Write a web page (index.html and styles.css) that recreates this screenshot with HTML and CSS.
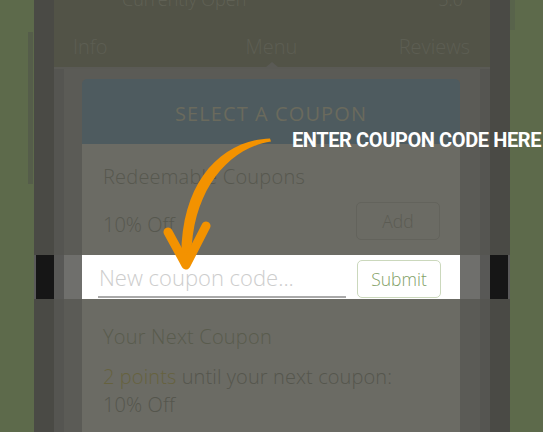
FILE: index.html
```html
<!DOCTYPE html>
<html lang="en">
<head>
<meta charset="utf-8">
<title>Select a coupon</title>
<link rel="stylesheet" href="styles.css">
</head>
<body>
<div class="stage">
  <div class="phone">
    <div class="row">
      <header class="app-header">
        <div class="status"><span>Currently Open</span><span>5.0</span></div>
        <nav class="tabs"><span class="tab-left">Info</span><span class="tab-mid">Menu</span><span class="tab-right">Reviews</span></nav>
      </header>
    </div>
    <div class="row">
      <div class="backdrop backdrop-top">
        <div class="modal-head">SELECT A COUPON</div>
        <div class="modal-body modal-body-top">
          <h2 class="section-title">Redeemable Coupons</h2>
          <div class="coupon-row">
            <span class="coupon-name">10% Off</span>
            <button class="btn btn-dim">Add</button>
          </div>
        </div>
      </div>
    </div>
    <div class="row row-lit">
      <div class="lit-screen">
        <div class="lit-modal">
          <input class="code-input" type="text" placeholder="New coupon code...">
          <button class="btn btn-submit">Submit</button>
        </div>
      </div>
    </div>
    <div class="row row-fill">
      <div class="backdrop backdrop-bottom">
        <div class="modal-body modal-body-bottom">
          <h2 class="section-title next-title">Your Next Coupon</h2>
          <p class="next-text"><span class="pts">2 points</span> until your next coupon:<br>10% Off</p>
        </div>
      </div>
    </div>
  </div>
  <svg class="arrow" viewBox="0 0 543 432" width="543" height="432" aria-hidden="true">
    <path d="M270 138.5 C222 140 179 182 181.5 262 L191.5 262 C190 192 228 148 271 141.5 Z" fill="#f39200"/>
    <path d="M168 232 L186 265 L206 226" fill="none" stroke="#f39200" stroke-width="9" stroke-linecap="round" stroke-linejoin="round"/>
  </svg>
  <div class="callout">ENTER COUPON CODE HERE</div>
</div>
</body>
</html>
```
FILE: styles.css
```css
html, body {
  margin: 0;
  padding: 0;
}
body {
  background: #5d6a4b;
  font-family: "Open Sans", "Liberation Sans", sans-serif;
  font-weight: 300;
  overflow: hidden;
}
.stage {
  position: relative;
  width: 543px;
  height: 432px;
  overflow: hidden;
}
.phone {
  position: relative;
  margin-left: 34px;
  width: 472px;
  height: 432px;
  padding: 0 2px;
  background: #4a4a45;
  display: flex;
  flex-direction: column;
}
.phone::before {
  content: "";
  position: absolute;
  left: -6px;
  top: 32px;
  width: 5px;
  height: 152px;
  background: #555d4a;
}
.phone::after {
  content: "";
  position: absolute;
  right: -5px;
  top: 0;
  width: 5px;
  height: 30px;
  background: #58634b;
}
.row {
  display: flex;
  border-left: 18px solid #4a4a45;
  border-right: 18px solid #4a4a45;
}
.row-lit {
  border-color: #161616;
  box-shadow: -2px 0 0 #5a5a5a, 2px 0 0 #5a5a5a;
}
.row-fill {
  flex: 1;
}

/* header */
.app-header {
  position: relative;
  flex: 1;
  height: 67px;
  background: #525347;
  border-bottom: 2px solid #5a5a55;
  overflow: hidden;
}
.app-header::after {
  content: "";
  position: absolute;
  left: 212px;
  bottom: 0;
  border-left: 6px solid transparent;
  border-right: 6px solid transparent;
  border-bottom: 5px solid #5a5a55;
}
.status {
  display: flex;
  justify-content: space-between;
  margin-top: -13px;
  padding: 0 27px 0 68px;
  font-size: 18px;
  line-height: 24px;
  color: #606155;
}
.tabs {
  display: grid;
  grid-template-columns: 1fr 1fr 1fr;
  margin-top: 23.5px;
  padding: 0 20px 0 19px;
  font-size: 20px;
  line-height: 24px;
  color: #5d5e53;
}
.tab-mid { text-align: center; }
.tab-right { text-align: right; }

/* dimmed backdrop + modal */
.backdrop {
  flex: 1;
  display: flex;
  flex-direction: column;
  background: #5b5b56;
  border-left: 10px solid #555551;
  border-right: 10px solid #555551;
  padding: 0 20px 0 18px;
}
.backdrop-top {
  padding-top: 10px;
}
.modal-head {
  height: 65px;
  display: flex;
  align-items: center;
  justify-content: center;
  background: #4e5b5f;
  border-radius: 5px 5px 0 0;
  color: #6a6a5d;
  font-size: 20px;
  font-weight: 400;
  letter-spacing: 1.1px;
  padding-top: 4px;
  box-sizing: border-box;
}
.modal-body {
  background: #6b6b64;
  padding: 0 20px 0 21px;
}
.modal-body-top {
  padding-top: 20.5px;
  padding-bottom: 15px;
}
.modal-body-bottom {
  flex: 1;
  padding-top: 25.5px;
}
.section-title {
  margin: 0;
  font-size: 20px;
  font-weight: 300;
  line-height: 24px;
  letter-spacing: 0.2px;
  color: #57584f;
}
.coupon-row {
  margin-top: 13.5px;
  height: 38px;
  display: flex;
  align-items: center;
  justify-content: space-between;
}
.coupon-name {
  padding-top: 7px;
  font-size: 20px;
  line-height: 24px;
  color: #57584f;
}
.btn {
  width: 84px;
  height: 38px;
  box-sizing: border-box;
  border-radius: 5px;
  background: transparent;
  font-family: "Open Sans", "Liberation Sans", sans-serif;
  font-weight: 300;
  font-size: 17.5px;
  padding: 0;
}
.btn-dim {
  border: 1px solid #63635c;
  color: #5b5b53;
}
.next-title {
  color: #595b4d;
}
.next-text {
  margin: 14.7px 0 0;
  font-size: 20px;
  line-height: 28px;
  letter-spacing: 0.1px;
  color: #55564d;
}
.pts {
  color: #66623f;
}

/* highlighted strip */
.lit-screen {
  flex: 1;
  display: flex;
  background: #6f6f6c;
  border-left: 10px solid #585856;
  border-right: 10px solid #585856;
  padding: 0 20px 0 18px;
}
.lit-modal {
  flex: 1;
  height: 44px;
  box-sizing: border-box;
  background: #ffffff;
  display: flex;
  align-items: flex-end;
  justify-content: space-between;
  padding: 0 19px 1px 16px;
}
.code-input {
  width: 248px;
  height: 40px;
  box-sizing: border-box;
  border: none;
  border-bottom: 2px solid #a9a9a9;
  background: transparent;
  outline: none;
  padding: 0 0 0 1px;
  font-family: "Open Sans", "Liberation Sans", sans-serif;
  font-weight: 300;
  font-size: 22px;
  color: #444;
}
.code-input::placeholder {
  color: #cdcdcd;
}
.btn-submit {
  border: 1px solid #cbd8bc;
  color: #82a066;
}

/* annotations */
.arrow {
  position: absolute;
  left: 0;
  top: 0;
  pointer-events: none;
}
.callout {
  position: absolute;
  left: 292px;
  top: 130.4px;
  font-family: Roboto, "Liberation Sans", sans-serif;
  font-weight: 700;
  font-size: 20px;
  line-height: 20px;
  letter-spacing: -0.4px;
  color: #ffffff;
  white-space: nowrap;
}
```
